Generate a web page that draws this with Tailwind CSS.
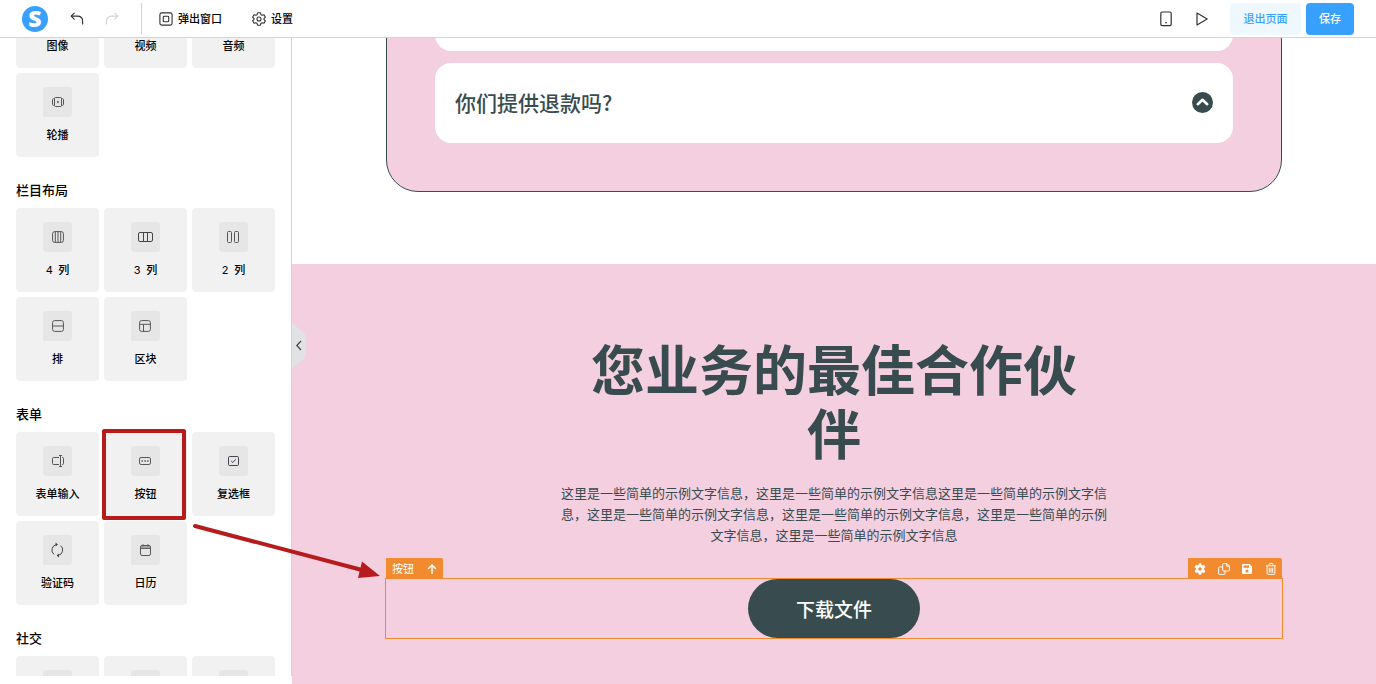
<!DOCTYPE html>
<html lang="zh-CN">
  <head>
    <meta charset="UTF-8" />
    <meta name="viewport" content="width=device-width, initial-scale=1.0" />
    <title>页面编辑器</title>
    <script src="https://cdn.jsdelivr.net/npm/@tailwindcss/browser@4"></script>
  </head>
  <body
    class="flex h-screen flex-col overflow-hidden bg-white font-['Noto_Sans_CJK_SC',sans-serif] text-[11px] text-black"
  >
    <!-- Top bar -->
    <header
      class="flex h-[38px] shrink-0 items-center justify-between border-b border-[#d4d4d4] pr-[22px] pl-[22px]"
    >
      <div class="flex h-full items-center">
        <a
          href="#"
          aria-label="首页"
          class="flex size-[26px] items-center justify-center rounded-full bg-[#38a0ff] font-['Noto_Sans',sans-serif] text-[23px] leading-none font-black text-white"
          >S</a
        >
        <button type="button" aria-label="撤销" class="ml-[22px] text-[#333]">
          <svg class="size-[14px]" viewBox="0 0 14 14" fill="none" stroke="currentColor" stroke-width="1.2" stroke-linecap="round" stroke-linejoin="round">
            <path d="M4.2 1.2L1.2 4.2L4.2 7.2" />
            <path d="M1.5 4.2H7.5C10.8 4.2 12.6 6.4 12.6 9.4V12" />
          </svg>
        </button>
        <button type="button" aria-label="重做" class="ml-[21px] text-[#d4d4d4]">
          <svg class="size-[14px]" viewBox="0 0 14 14" fill="none" stroke="currentColor" stroke-width="1.2" stroke-linecap="round" stroke-linejoin="round">
            <path d="M9.8 1.2L12.8 4.2L9.8 7.2" />
            <path d="M12.5 4.2H6.5C3.2 4.2 1.4 6.4 1.4 9.4V12" />
          </svg>
        </button>
        <div class="ml-[22px] h-[31px] w-px bg-[#d4d4d4]"></div>
        <button type="button" class="ml-[17px] flex items-center gap-[5px] font-medium">
          <svg class="size-[14px] text-[#333]" viewBox="0 0 14 14" fill="none" stroke="currentColor" stroke-width="1.1">
            <rect x="0.9" y="0.9" width="12.2" height="12.2" rx="1.8" />
            <rect x="4.3" y="4.3" width="5.4" height="5.4" rx="0.8" />
          </svg>
          弹出窗口
        </button>
        <button type="button" class="ml-[30px] flex items-center gap-[5px] font-medium">
          <svg class="size-[14px] text-[#333]" viewBox="0 0 14 14" fill="none" stroke="currentColor" stroke-width="1.1" stroke-linejoin="round">
            <path d="M5.6 0.8H8.4L9 2.7L10.1 3.3L12 2.8L13.4 5.2L12 6.5V7.5L13.4 8.8L12 11.2L10.1 10.7L9 11.3L8.4 13.2H5.6L5 11.3L3.9 10.7L2 11.2L0.6 8.8L2 7.5V6.5L0.6 5.2L2 2.8L3.9 3.3L5 2.7Z" />
            <circle cx="7" cy="7" r="2" />
          </svg>
          设置
        </button>
      </div>
      <div class="flex items-center">
        <button type="button" aria-label="手机预览" class="text-[#333]">
          <svg class="h-4 w-3" viewBox="0 0 12 16" fill="none" stroke="currentColor" stroke-width="1.2">
            <rect x="0.8" y="1" width="10.4" height="13.6" rx="1.4" />
            <path d="M5.2 11.6H6.8" />
          </svg>
        </button>
        <button type="button" aria-label="预览" class="ml-6 text-[#333]">
          <svg class="h-4 w-3" viewBox="0 0 12 16" fill="none" stroke="currentColor" stroke-width="1.2" stroke-linejoin="round">
            <path d="M1 2L11.2 8L1 14Z" />
          </svg>
        </button>
        <button type="button" class="ml-[22px] h-8 w-[71px] rounded-[4px] bg-[#eff8ff] font-medium text-[#38a0ff]">
          退出页面
        </button>
        <button type="button" class="ml-[5px] h-8 w-12 rounded-[4px] bg-[#38a0ff] font-medium text-white">
          保存
        </button>
      </div>
    </header>

    <div class="flex min-h-0 flex-1">
      <!-- Component palette -->
      <aside class="mb-2 w-[292px] shrink-0 overflow-hidden border-r border-[#d4d4d4] pr-4 pl-4">
        <div class="-mt-[54px] flex flex-col gap-[23px]">
          <section>
            <div class="grid grid-cols-[repeat(3,83px)] gap-[5px]">
              <button type="button" class="flex h-[84px] flex-col items-center rounded-[4px] bg-[#f1f1f1] pt-[14px]">
                <span class="h-[30px] w-[29px] rounded-[3px] bg-[#e6e6e6]"></span>
                <span class="mt-2 leading-[18px] font-medium">图像</span>
              </button>
              <button type="button" class="flex h-[84px] flex-col items-center rounded-[4px] bg-[#f1f1f1] pt-[14px]">
                <span class="h-[30px] w-[29px] rounded-[3px] bg-[#e6e6e6]"></span>
                <span class="mt-2 leading-[18px] font-medium">视频</span>
              </button>
              <button type="button" class="flex h-[84px] flex-col items-center rounded-[4px] bg-[#f1f1f1] pt-[14px]">
                <span class="h-[30px] w-[29px] rounded-[3px] bg-[#e6e6e6]"></span>
                <span class="mt-2 leading-[18px] font-medium">音频</span>
              </button>
              <button type="button" class="flex h-[84px] flex-col items-center rounded-[4px] bg-[#f1f1f1] pt-[14px]">
                <span class="flex h-[30px] w-[29px] items-center justify-center rounded-[3px] bg-[#e6e6e6] text-[#55565a]">
                  <svg class="size-3" viewBox="0 0 12 12" fill="none" stroke="currentColor">
                    <rect x="2.5" y="1.5" width="7" height="9" rx="1" />
                    <path d="M2.4 2.6C1 2.6 0.5 3 0.5 4V8C0.5 9 1 9.4 2.4 9.4M9.6 2.6C11 2.6 11.5 3 11.5 4V8C11.5 9 11 9.4 9.6 9.4" />
                    <path d="M5.2 4.6L7.4 6L5.2 7.4Z" fill="currentColor" stroke="none" />
                  </svg>
                </span>
                <span class="mt-2 leading-[18px] font-medium">轮播</span>
              </button>
            </div>
          </section>

          <section>
            <h2 class="mb-[9px] text-[13px] leading-[19px] font-medium">栏目布局</h2>
            <div class="grid grid-cols-[repeat(3,83px)] gap-[5px]">
              <button type="button" class="flex h-[84px] flex-col items-center rounded-[4px] bg-[#f1f1f1] pt-[14px]">
                <span class="flex h-[30px] w-[29px] items-center justify-center rounded-[3px] bg-[#e6e6e6] text-[#55565a]">
                  <svg class="size-3" viewBox="0 0 12 12" fill="none" stroke="currentColor">
                    <rect x="0.6" y="0.6" width="10.8" height="10.8" rx="2" />
                    <path d="M3.3 0.6V11.4M6 0.6V11.4M8.7 0.6V11.4" />
                  </svg>
                </span>
                <span class="mt-2 leading-[18px] font-medium"><span class="font-[Inter] font-normal">4&nbsp;</span> 列</span>
              </button>
              <button type="button" class="flex h-[84px] flex-col items-center rounded-[4px] bg-[#f1f1f1] pt-[14px]">
                <span class="flex h-[30px] w-[29px] items-center justify-center rounded-[3px] bg-[#e6e6e6] text-[#44454a]">
                  <svg class="h-3 w-[15px]" viewBox="0 0 15 12" fill="none" stroke="currentColor">
                    <rect x="0.5" y="1.5" width="14" height="9" rx="1.5" />
                    <path d="M5.5 1.5V10.5M9.5 1.5V10.5" />
                  </svg>
                </span>
                <span class="mt-2 leading-[18px] font-medium"><span class="font-[Inter] font-normal">3&nbsp;</span> 列</span>
              </button>
              <button type="button" class="flex h-[84px] flex-col items-center rounded-[4px] bg-[#f1f1f1] pt-[14px]">
                <span class="flex h-[30px] w-[29px] items-center justify-center rounded-[3px] bg-[#e6e6e6] text-[#55565a]">
                  <svg class="h-3 w-[13px]" viewBox="0 0 13 12" fill="none" stroke="currentColor">
                    <rect x="0.5" y="0.5" width="4" height="11" rx="1" />
                    <rect x="7.5" y="0.5" width="4" height="11" rx="1" />
                  </svg>
                </span>
                <span class="mt-2 leading-[18px] font-medium"><span class="font-[Inter] font-normal">2&nbsp;</span> 列</span>
              </button>
              <button type="button" class="flex h-[84px] flex-col items-center rounded-[4px] bg-[#f1f1f1] pt-[14px]">
                <span class="flex h-[30px] w-[29px] items-center justify-center rounded-[3px] bg-[#e6e6e6] text-[#55565a]">
                  <svg class="size-3" viewBox="0 0 12 12" fill="none" stroke="currentColor">
                    <rect x="0.6" y="0.6" width="10.8" height="10.8" rx="2" />
                    <path d="M0.6 6H11.4" />
                  </svg>
                </span>
                <span class="mt-2 leading-[18px] font-medium">排</span>
              </button>
              <button type="button" class="flex h-[84px] flex-col items-center rounded-[4px] bg-[#f1f1f1] pt-[14px]">
                <span class="flex h-[30px] w-[29px] items-center justify-center rounded-[3px] bg-[#e6e6e6] text-[#55565a]">
                  <svg class="h-3 w-[13px]" viewBox="0 0 13 12" fill="none" stroke="currentColor">
                    <rect x="0.6" y="0.6" width="10.8" height="10.8" rx="2" />
                    <path d="M0.6 4.3H11.4M4.5 4.3V11.4" />
                  </svg>
                </span>
                <span class="mt-2 leading-[18px] font-medium">区块</span>
              </button>
            </div>
          </section>

          <section>
            <h2 class="mb-[9px] text-[13px] leading-[19px] font-medium">表单</h2>
            <div class="grid grid-cols-[repeat(3,83px)] gap-[5px]">
              <button type="button" class="flex h-[84px] flex-col items-center rounded-[4px] bg-[#f1f1f1] pt-[14px]">
                <span class="flex h-[30px] w-[29px] items-center justify-center rounded-[3px] bg-[#e6e6e6] text-[#55565a]">
                  <svg class="size-3" viewBox="0 0 12 12" fill="none" stroke="currentColor">
                    <path d="M7 2.5H1.5C0.9 2.5 0.5 2.9 0.5 3.5V8.5C0.5 9.1 0.9 9.5 1.5 9.5H7" />
                    <path d="M10 2.5H10.6C11.2 2.5 11.5 2.9 11.5 3.5V8.5C11.5 9.1 11.2 9.5 10.6 9.5H10" />
                    <path d="M8.5 1V11M7 0.5H10M7 11.5H10" />
                  </svg>
                </span>
                <span class="mt-2 leading-[18px] font-medium">表单输入</span>
              </button>
              <button type="button" class="relative flex h-[84px] flex-col items-center rounded-[4px] bg-[#f1f1f1] pt-[14px]">
                <span class="flex h-[30px] w-[29px] items-center justify-center rounded-[3px] bg-[#e6e6e6] text-[#55565a]">
                  <svg class="h-3 w-[13px]" viewBox="0 0 13 12" fill="none" stroke="currentColor">
                    <rect x="0.5" y="2.5" width="11" height="7" rx="1.6" />
                    <path d="M2.5 6H4M5.3 6H6.8M8.1 6H9.6" stroke-width="1.5" />
                  </svg>
                </span>
                <span class="mt-2 leading-[18px] font-medium">按钮</span>
                <!-- highlight -->
                <span class="absolute -top-[3px] right-px -bottom-1 -left-0.5 rounded-[2px] border-4 border-[#b71c1c]"></span>
              </button>
              <button type="button" class="flex h-[84px] flex-col items-center rounded-[4px] bg-[#f1f1f1] pt-[14px]">
                <span class="flex h-[30px] w-[29px] items-center justify-center rounded-[3px] bg-[#e6e6e6] text-[#44454a]">
                  <svg class="h-3 w-[13px]" viewBox="0 0 13 12" fill="none" stroke="currentColor">
                    <rect x="1.5" y="1.5" width="10" height="9" rx="1.2" />
                    <path d="M4.2 6L5.8 7.5L8.7 4.4" />
                  </svg>
                </span>
                <span class="mt-2 leading-[18px] font-medium">复选框</span>
              </button>
              <button type="button" class="flex h-[84px] flex-col items-center rounded-[4px] bg-[#f1f1f1] pt-[14px]">
                <span class="flex h-[30px] w-[29px] items-center justify-center rounded-[3px] bg-[#e6e6e6] text-[#44454a]">
                  <svg class="h-4 w-[15px]" viewBox="0 0 15 16" fill="none" stroke="currentColor">
                    <path d="M6.2 2.6A5.6 5.6 0 0 0 4 12.4M8.4 13.4A5.6 5.6 0 0 0 10.6 3.6" />
                    <path d="M5.6 0.6L8 2.6L5.6 4.4Z M9 11.6L6.6 13.4L9 15.4Z" fill="currentColor" stroke="none" />
                  </svg>
                </span>
                <span class="mt-2 leading-[18px] font-medium">验证码</span>
              </button>
              <button type="button" class="flex h-[84px] flex-col items-center rounded-[4px] bg-[#f1f1f1] pt-[14px]">
                <span class="flex h-[30px] w-[29px] items-center justify-center rounded-[3px] bg-[#e6e6e6] text-[#55565a]">
                  <svg class="h-3 w-[13px]" viewBox="0 0 13 12" fill="none" stroke="currentColor">
                    <rect x="1.5" y="1.5" width="10" height="10" rx="1.6" />
                    <path d="M1.5 4.4H11.5M4 0.2V2.4M9 0.2V2.4" />
                    <path d="M2 3H11" stroke-opacity="0.4" stroke-width="2" />
                  </svg>
                </span>
                <span class="mt-2 leading-[18px] font-medium">日历</span>
              </button>
            </div>
          </section>

          <section>
            <h2 class="mb-[9px] text-[13px] leading-[19px] font-medium">社交</h2>
            <div class="grid grid-cols-[repeat(3,83px)] gap-[5px]">
              <div class="flex h-[84px] justify-center rounded-[4px] bg-[#f1f1f1] pt-[14px]">
                <span class="h-[30px] w-[29px] rounded-[3px] bg-[#e6e6e6]"></span>
              </div>
              <div class="flex h-[84px] justify-center rounded-[4px] bg-[#f1f1f1] pt-[14px]">
                <span class="h-[30px] w-[29px] rounded-[3px] bg-[#e6e6e6]"></span>
              </div>
              <div class="flex h-[84px] justify-center rounded-[4px] bg-[#f1f1f1] pt-[14px]">
                <span class="h-[30px] w-[29px] rounded-[3px] bg-[#e6e6e6]"></span>
              </div>
            </div>
          </section>
        </div>
      </aside>

      <!-- Page canvas -->
      <main class="relative flex min-w-0 flex-1 flex-col overflow-hidden text-[#384c4f]">
        <button
          type="button"
          aria-label="收起面板"
          class="absolute top-[285px] left-0 z-10"
        >
          <svg class="h-[46px] w-[14px]" viewBox="0 0 14 46">
            <path d="M0 0L11 9Q14 11.5 14 14.5V31Q14 34 11 36.5L0 46Z" fill="#e0e2e4" />
            <path d="M9 18L4.8 22.5L9 27" fill="none" stroke="#444" stroke-width="1.2" />
          </svg>
        </button>

        <section class="px-8 pb-[72px]">
          <div
            class="mx-auto -mt-[116px] flex max-w-4xl flex-col gap-3 rounded-[32px] border border-[#384c4f] bg-[#f4cfdf] p-12"
          >
            <div class="h-20 rounded-2xl bg-white"></div>
            <div class="flex h-20 items-center justify-between rounded-2xl bg-white px-5 pb-0.5">
              <h3 class="text-[21px] leading-8 font-medium">你们提供退款吗?</h3>
              <button type="button" aria-label="收起">
                <svg class="size-[21px]" viewBox="0 0 21 21">
                  <circle cx="10.5" cy="10.5" r="10.5" fill="#384c4f" />
                  <path d="M5.8 12.2L10.5 7.8L15.2 12.2" fill="none" stroke="#fff" stroke-width="2.6" stroke-linecap="round" stroke-linejoin="round" />
                </svg>
              </button>
            </div>
          </div>
        </section>

        <section class="flex-1 bg-[#f4cfdf] px-8 pt-[72px]">
          <div class="mx-auto max-w-[546px] text-center">
            <h1 class="px-5 text-[54px] leading-[64px] font-bold">您业务的最佳合作伙伴</h1>
            <p class="mt-[18px] text-[13px] leading-[21px]">
              这里是一些简单的示例文字信息，这里是一些简单的示例文字信息这里是一些简单的示例文字信息，这里是一些简单的示例文字信息，这里是一些简单的示例文字信息，这里是一些简单的示例文字信息，这里是一些简单的示例文字信息
            </p>
          </div>

          <!-- Selected block -->
          <div class="relative mx-auto mt-[34px] flex max-w-4xl justify-center outline outline-[#f28a30]">
            <div class="absolute bottom-full left-0 flex h-[21px] w-[57px] items-center justify-between rounded-tr-[2px] bg-[#f28a30] px-1.5 text-white">
              按钮
              <button type="button" aria-label="上移">
                <svg class="size-[10px]" viewBox="0 0 10 10" fill="none" stroke="currentColor" stroke-width="1.5">
                  <path d="M5 10V1.2M1 5L5 1L9 5" />
                </svg>
              </button>
            </div>
            <div class="absolute right-0 bottom-full flex h-[21px] w-[94px] items-center justify-between rounded-tr-[2px] bg-[#f28a30] pr-[5px] pl-1.5 text-white">
              <button type="button" aria-label="设置">
                <svg class="size-3" viewBox="0 0 12 12" fill="currentColor">
                  <path fill-rule="evenodd" d="M4.8 0.3H7.2L7.6 2L8.6 2.6L10.2 2L11.4 4.1L10.2 5.3V6.7L11.4 7.9L10.2 10L8.6 9.4L7.6 10L7.2 11.7H4.8L4.4 10L3.4 9.4L1.8 10L0.6 7.9L1.8 6.7V5.3L0.6 4.1L1.8 2L3.4 2.6L4.4 2ZM6 4.2A1.8 1.8 0 1 0 6 7.8A1.8 1.8 0 1 0 6 4.2Z" />
                </svg>
              </button>
              <button type="button" aria-label="复制">
                <svg class="size-3" viewBox="0 0 12 12" fill="none" stroke="currentColor">
                  <path d="M5.5 0.6H9L11.4 3V7.2Q11.4 8 10.6 8H5.5Q4.7 8 4.7 7.2V1.4Q4.7 0.6 5.5 0.6Z" />
                  <path d="M8.6 0.8V3.2H11.2M4.6 4H1.4Q0.6 4 0.6 4.8V10.6Q0.6 11.4 1.4 11.4H6.2Q7 11.4 7 10.6V8.2" />
                </svg>
              </button>
              <button type="button" aria-label="保存">
                <svg class="size-3" viewBox="0 0 12 12" fill="currentColor">
                  <path fill-rule="evenodd" d="M2 1H8.6L11 3.4V10Q11 11 10 11H2Q1 11 1 10V2Q1 1 2 1ZM2.5 2.6V4.8H8V2.6ZM6 6.5A1.5 1.5 0 1 0 6 9.5A1.5 1.5 0 1 0 6 6.5Z" />
                </svg>
              </button>
              <button type="button" aria-label="删除">
                <svg class="size-3" viewBox="0 0 12 12" fill="none" stroke="currentColor">
                  <path d="M1 2.8H11M4 2.6V1.2Q4 0.6 4.6 0.6H7.4Q8 0.6 8 1.2V2.6M2.1 3V10.4Q2.1 11.4 3.1 11.4H8.9Q9.9 11.4 9.9 10.4V3M4.3 4.8V9.6M6 4.8V9.6M7.7 4.8V9.6" />
                </svg>
              </button>
            </div>
            <button type="button" class="rounded-full bg-[#384c4f] px-12 py-[15px] text-[19px] leading-[29px] font-medium text-white">
              下载文件
            </button>
          </div>
        </section>
      </main>
    </div>

    <!-- Pointer from the palette to the block -->
    <svg class="pointer-events-none absolute top-[520px] left-[190px] z-20 h-16 w-[192px]" viewBox="0 0 192 64">
      <path d="M5 6L172 50" stroke="#b71c1c" stroke-width="4" stroke-linecap="round" />
      <path d="M190 56L168 58L172 41.5Z" fill="#b71c1c" />
    </svg>
  </body>
</html>
